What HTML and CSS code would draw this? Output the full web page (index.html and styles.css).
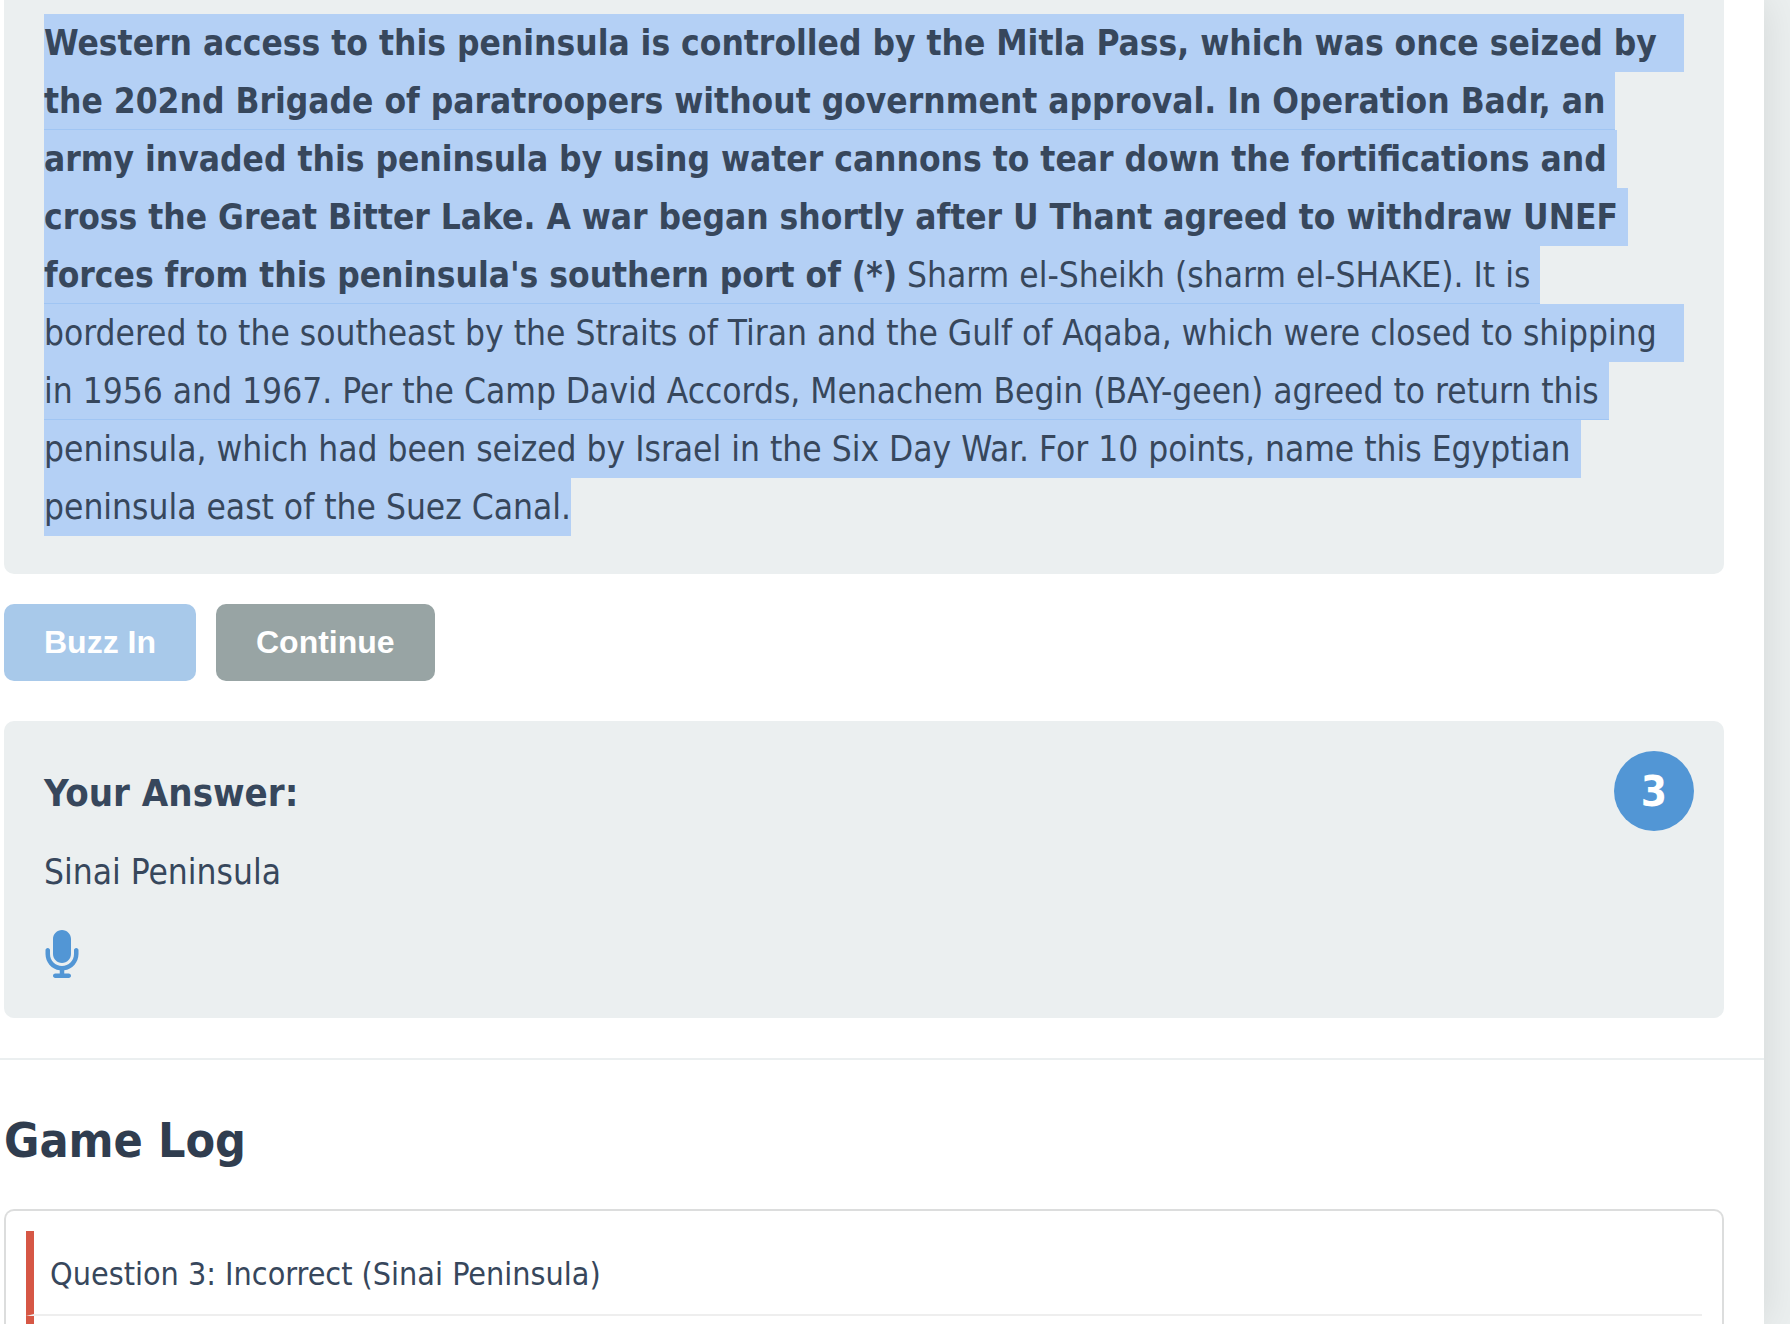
FILE: index.html
```html
<!DOCTYPE html>
<html lang="en">
<head>
<meta charset="utf-8">
<title>Quiz</title>
<link rel="stylesheet" href="styles.css">
</head>
<body>
<main class="container">
  <section class="question">
    <p class="question-text">
      <b class="line full">Western access to this peninsula is controlled by the Mitla Pass, which was once seized by</b>
      <b class="line seam">the 202nd Brigade of paratroopers without government approval. In Operation Badr, an</b>
      <b class="line">army invaded this peninsula by using water cannons to tear down the fortifications and</b>
      <b class="line">cross the Great Bitter Lake. A war began shortly after U Thant agreed to withdraw UNEF</b>
      <span class="line seam"><b>forces from this peninsula's southern port of (*)</b> Sharm el-Sheikh (sharm el-SHAKE). It is</span>
      <span class="line full">bordered to the southeast by the Straits of Tiran and the Gulf of Aqaba, which were closed to shipping</span>
      <span class="line seam">in 1956 and 1967. Per the Camp David Accords, Menachem Begin (BAY-geen) agreed to return this</span>
      <span class="line">peninsula, which had been seized by Israel in the Six Day War. For 10 points, name this Egyptian</span>
      <span class="line last">peninsula east of the Suez Canal.</span>
    </p>
  </section>
  <div class="controls">
    <button class="btn btn-buzz" type="button" disabled>Buzz In</button>
    <button class="btn btn-continue" type="button">Continue</button>
  </div>
  <section class="answer">
    <div class="answer-body">
      <h3>Your Answer:</h3>
      <p>Sinai Peninsula</p>
      <button class="mic" type="button" aria-label="Microphone">
        <svg viewBox="0 0 384 512" width="36" height="48" aria-hidden="true"><path fill="currentColor" d="M192 0C139 0 96 43 96 96V256c0 53 43 96 96 96s96-43 96-96V96c0-53-43-96-96-96zM64 216c0-13.3-10.7-24-24-24s-24 10.7-24 24v40c0 89.1 66.2 162.7 152 174.4V464H120c-13.3 0-24 10.7-24 24s10.7 24 24 24h144c13.3 0 24-10.7 24-24s-10.7-24-24-24H216V430.4c85.8-11.7 152-85.3 152-174.4V216c0-13.3-10.7-24-24-24s-24 10.7-24 24v40c0 70.7-57.3 128-128 128s-128-57.3-128-128V216z"/></svg>
      </button>
    </div>
    <div class="timer">3</div>
  </section>
  <section class="log">
    <h2>Game Log</h2>
    <ul class="log-list">
      <li>Question 3: Incorrect (Sinai Peninsula)</li>
      <li></li>
    </ul>
  </section>
</main>
</body>
</html>
```
FILE: styles.css
```css
* { box-sizing: border-box; margin: 0; padding: 0; }

body {
  height: 100vh;
  overflow: hidden;
  background: #ebefef;
  color: #37475c;
  font-family: "DejaVu Sans Condensed", "Noto Sans", sans-serif;
  font-size: 35px;
  line-height: 58px;
}

.container {
  display: flex;
  flex-direction: column;
  height: 100%;
  margin-right: 26px;
  background: #fff;
  box-shadow: 0 0 40px rgba(0, 0, 0, 0.1);
}

.question {
  margin: 0 40px 30px 4px;
  padding: 14px 40px 38px;
  border-radius: 0 0 10px 10px;
  background: #ebeff0;
}

.line {
  display: block;
  width: fit-content;
  padding-right: 10px;
  background: #b4d0f5;
  white-space: nowrap;
}
.line b { font-weight: bold; }
.full { width: auto; }
.seam { box-shadow: inset 0 -1px #a0c5f3; }
.last { padding-right: 0; }

.controls {
  display: flex;
  gap: 20px;
  margin: 0 40px 40px 4px;
}

.btn {
  padding: 20px 40px;
  border: 0;
  border-radius: 10px;
  color: #fff;
  font: bold 32px/37px "Liberation Sans", Arial, sans-serif;
}
.btn-buzz { background: #a8c9ea; }
.btn-continue { background: #98a4a4; }

.answer {
  display: flex;
  justify-content: space-between;
  align-items: flex-start;
  margin: 0 40px 40px 4px;
  padding: 30px 30px 40px 40px;
  border-radius: 10px;
  background: #ebeff0;
}
.answer-body { padding-top: 12px; }

h3 {
  margin-bottom: 20px;
  font-size: 38px;
  line-height: 60px;
}

.mic {
  display: block;
  margin-top: 29px;
  border: 0;
  background: none;
  color: #5296d5;
}
.mic svg { display: block; }

.timer {
  width: 80px;
  padding-top: 2px;
  border-radius: 50%;
  background: #5296d5;
  color: #fff;
  font-size: 42px;
  font-weight: bold;
  line-height: 78px;
  text-align: center;
}

.log {
  display: flex;
  flex: 1;
  flex-direction: column;
  min-height: 0;
  padding: 42px 40px 0 4px;
  border-top: 2px solid #ebeff0;
}

h2 {
  margin-bottom: 30px;
  color: #303d4f;
  font-size: 48px;
  line-height: 77px;
}

.log-list {
  flex: 1;
  min-height: 0;
  overflow: hidden;
  padding: 20px 20px 0;
  border: 2px solid #dcdddd;
  border-bottom: 0;
  border-radius: 10px 10px 0 0;
  list-style: none;
}

.log-list li {
  min-height: 85px;
  padding: 18px 16px 14px;
  border-bottom: 2px solid #eee;
  border-left: 8px solid #d65745;
  font-size: 32px;
  line-height: 51px;
}
```
